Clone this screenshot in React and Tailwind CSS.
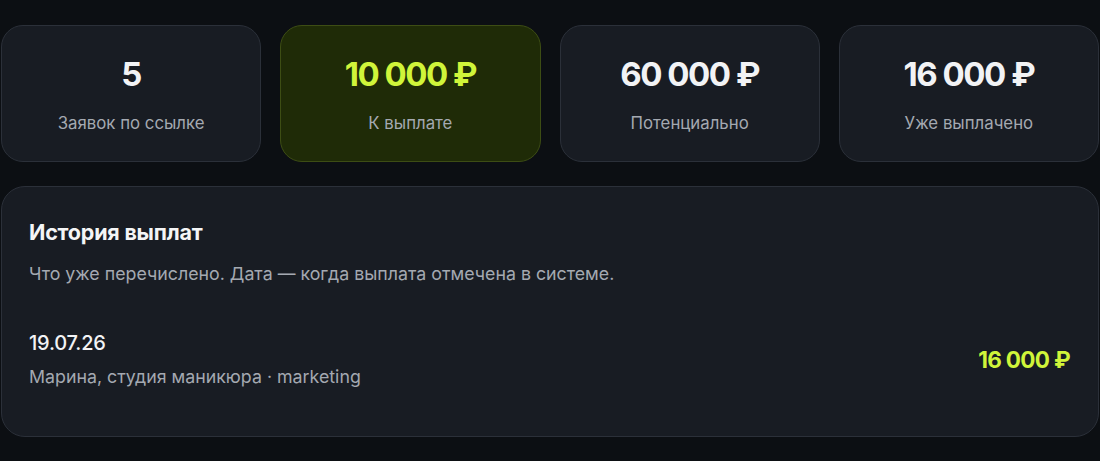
const stats = [
  { value: '5', label: 'Заявок по ссылке' },
  { value: '10 000 ₽', label: 'К выплате', accent: true },
  { value: '60 000 ₽', label: 'Потенциально' },
  { value: '16 000 ₽', label: 'Уже выплачено' },
];

const payouts = [
  { date: '19.07.26', who: 'Марина, студия маникюра · marketing', amount: '16 000 ₽' },
];

const StatCard = ({ value, label, accent }) => (
  <div
    className={`h-[137px] rounded-[22px] border flex flex-col items-center justify-center ${
      accent ? 'bg-[#1f2b07] border-[#3d4d14]' : 'bg-[#181c23] border-[#2b3039]'
    }`}
  >
    <div
      className={`mt-[2px] text-[33px] leading-none font-bold tracking-[-0.045em] ${
        accent ? 'text-[#d0f53a]' : 'text-[#f2f3f5]'
      }`}
    >
      {value}
    </div>
    <div className="mt-[24px] text-[16.8px] leading-none text-[#a4a9b1]">{label}</div>
  </div>
);

export default function App() {
  return (
    <div
      className="min-h-[461px] bg-[#0c0f13] px-[1px] pt-[25px]"
      style={{ fontFamily: 'Inter, "Noto Sans", sans-serif' }}
    >
      <div className="grid grid-cols-4 gap-[19px]">
        {stats.map((s) => (
          <StatCard key={s.label} {...s} />
        ))}
      </div>

      <div className="mt-[24px] h-[251px] rounded-[24px] border border-[#2b3039] bg-[#181c23] pl-[27px] pr-[28px] pt-[32px]">
        <h2 className="text-[21.5px] leading-[26px] font-bold text-[#f4f5f6] tracking-[-0.01em]">История выплат</h2>
        <p className="mt-[18px] text-[17.8px] leading-[22px] text-[#a4a9b1]">
          Что уже перечислено. Дата — когда выплата отмечена в системе.
        </p>

        <div className="mt-[46px] flex flex-col">
          {payouts.map((p) => (
            <div key={p.date} className="flex items-center justify-between">
              <div>
                <div className="text-[20px] leading-[24px] font-medium text-[#f2f3f5] tracking-[-0.01em]">{p.date}</div>
                <div className="mt-[11px] text-[17.8px] leading-[22px] text-[#a4a9b1]">{p.who}</div>
              </div>
              <div className="text-[22.5px] font-bold tracking-[-0.03em] text-[#d0f53a]">{p.amount}</div>
            </div>
          ))}
        </div>
      </div>
    </div>
  );
}
